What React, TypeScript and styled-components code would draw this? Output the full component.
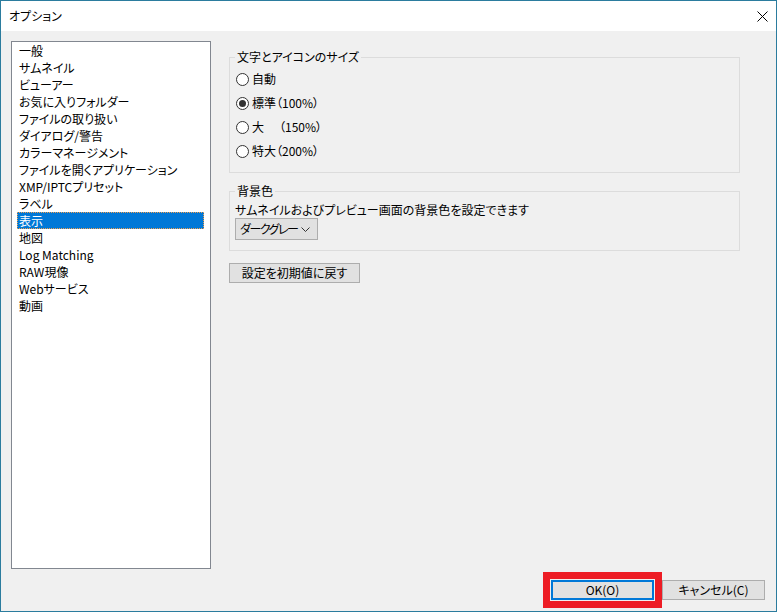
import React from "react";
import styled, { createGlobalStyle } from "styled-components";

const GlobalStyle = createGlobalStyle`
  html, body {
    margin: 0;
    padding: 0;
    background: #ffffff;
  }
  body {
    font-family: "Noto Sans CJK JP", "Noto Sans", sans-serif;
    font-size: 12px;
    font-feature-settings: "palt";
    color: #000000;
  }
  * {
    box-sizing: border-box;
  }
`;

const Window = styled.div`
  width: 777px;
  height: 612px;
  border: 1px solid #2b7c9e;
  display: flex;
  flex-direction: column;
  background: #f0f0f0;
`;

const TitleBar = styled.div`
  height: 30px;
  flex: none;
  background: #ffffff;
  display: flex;
  align-items: center;
  justify-content: space-between;
  padding-left: 8px;
`;

const Title = styled.span`
  line-height: 16px;
`;

const CloseButton = styled.div`
  width: 28px;
  height: 30px;
  display: flex;
  align-items: center;
  justify-content: center;
`;

const Body = styled.div`
  flex: 1;
  display: flex;
  flex-direction: column;
  padding: 10px 11px 3px 10px;
`;

const Main = styled.div`
  display: flex;
  gap: 18px;
  height: 528px;
`;

const CategoryList = styled.ul`
  width: 200px;
  height: 528px;
  margin: 0;
  padding: 0;
  list-style: none;
  background: #ffffff;
  border: 1px solid #828790;
`;

const CategoryItem = styled.li<{ $selected?: boolean }>`
  height: 17px;
  line-height: 18px;
  margin: 0 6px 0 5px;
  padding-left: 2px;
  white-space: nowrap;
  background: ${(p) => (p.$selected ? "#0078d7" : "transparent")};
  color: ${(p) => (p.$selected ? "#ffffff" : "#000000")};
  outline: ${(p) => (p.$selected ? "1px dotted #f0a050" : "none")};
  outline-offset: -1px;
`;

const Panel = styled.div`
  width: 511px;
  display: flex;
  flex-direction: column;
  align-items: flex-start;
  padding-top: 16px;
`;

const GroupBox = styled.div<{ $padLeft: number; $gap?: number }>`
  width: 511px;
  border: 1px solid #dcdcdc;
  display: flex;
  flex-direction: column;
  align-items: flex-start;
  padding: 0 6px 0 ${(p) => p.$padLeft}px;
  margin-top: ${(p) => p.$gap ?? 0}px;
`;

const GroupTitle = styled.div<{ $shift?: number }>`
  margin-top: -9px;
  margin-left: ${(p) => p.$shift ?? -1}px;
  padding: 0 2px;
  line-height: 16px;
  background: #f0f0f0;
  white-space: nowrap;
`;

const RadioList = styled.div`
  display: flex;
  flex-direction: column;
  margin-top: 2px;
  padding-bottom: 9px;
`;

const RadioRow = styled.label`
  height: 24px;
  display: flex;
  align-items: center;
  gap: 3px;
  line-height: 16px;
  white-space: pre;
`;

const RadioCircle = styled.span<{ $checked?: boolean }>`
  width: 13px;
  height: 13px;
  flex: none;
  border-radius: 50%;
  border: 1px solid #333333;
  background: #ffffff;
  display: flex;
  align-items: center;
  justify-content: center;
  &::after {
    content: "";
    width: 7px;
    height: 7px;
    border-radius: 50%;
    background: ${(p) => (p.$checked ? "#333333" : "transparent")};
  }
`;

const WideSpace = styled.span`
  display: inline-block;
  width: 15px;
`;

const Description = styled.div`
  margin-top: 3px;
  line-height: 16px;
  white-space: nowrap;
`;

const Select = styled.div`
  width: 83px;
  height: 22px;
  margin-bottom: 10px;
  border: 1px solid #adadad;
  background: #e1e1e1;
  display: flex;
  align-items: center;
  justify-content: space-between;
  padding: 0 7px 0 4px;
  line-height: 16px;
  white-space: nowrap;
`;

const SelectValue = styled.span`
  letter-spacing: -1.5px;
`;

const Chevron = styled.svg`
  flex: none;
`;

const Button = styled.div<{ $width: number; $focused?: boolean }>`
  width: ${(p) => p.$width}px;
  height: 20px;
  border: ${(p) => (p.$focused ? "2px solid #0078d7" : "1px solid #adadad")};
  background: #e1e1e1;
  display: flex;
  align-items: center;
  justify-content: center;
  line-height: 16px;
  white-space: nowrap;
`;

const ResetButton = styled(Button)`
  margin-top: 12px;
`;

const Footer = styled.div`
  margin-top: 3px;
  display: flex;
  align-items: center;
  justify-content: flex-end;
`;

const Highlight = styled.div`
  border: 7px solid #ed1c24;
  padding: 1px;
`;

const categories = [
  "一般",
  "サムネイル",
  "ビューアー",
  "お気に入りフォルダー",
  "ファイルの取り扱い",
  "ダイアログ/警告",
  "カラーマネージメント",
  "ファイルを開くアプリケーション",
  "XMP/IPTCプリセット",
  "ラベル",
  "表示",
  "地図",
  "Log Matching",
  "RAW現像",
  "Webサービス",
  "動画",
];

const sizes = [
  { name: "自動", rate: "", checked: false },
  { name: "標準", rate: "（100%）", checked: true },
  { name: "大", rate: "（150%）", checked: false, wide: true },
  { name: "特大", rate: "（200%）", checked: false },
];

export default function App() {
  return (
    <>
      <GlobalStyle />
      <Window>
        <TitleBar>
          <Title>オプション</Title>
          <CloseButton>
            <svg width="11" height="11" viewBox="0 0 11 11">
              <path d="M0.5 0.5 L10.5 10.5 M10.5 0.5 L0.5 10.5" stroke="#000" strokeWidth="1" />
            </svg>
          </CloseButton>
        </TitleBar>
        <Body>
          <Main>
            <CategoryList>
              {categories.map((c) => (
                <CategoryItem key={c} $selected={c === "表示"}>
                  {c}
                </CategoryItem>
              ))}
            </CategoryList>
            <Panel>
              <GroupBox $padLeft={6}>
                <GroupTitle>文字とアイコンのサイズ</GroupTitle>
                <RadioList>
                  {sizes.map((s) => (
                    <RadioRow key={s.name}>
                      <RadioCircle $checked={s.checked} />
                      <span>
                        {s.name}
                        {s.wide && <WideSpace>　</WideSpace>}
                        {s.rate}
                      </span>
                    </RadioRow>
                  ))}
                </RadioList>
              </GroupBox>
              <GroupBox $padLeft={5} $gap={18}>
                <GroupTitle $shift={0}>背景色</GroupTitle>
                <Description>サムネイルおよびプレビュー画面の背景色を設定できます</Description>
                <Select>
                  <SelectValue>ダークグレー</SelectValue>
                  <Chevron width="9" height="5" viewBox="0 0 9 5">
                    <path d="M0.5 0.5 L4.5 4.5 L8.5 0.5" stroke="#333" strokeWidth="1" fill="none" />
                  </Chevron>
                </Select>
              </GroupBox>
              <ResetButton $width={131}>設定を初期値に戻す</ResetButton>
            </Panel>
          </Main>
          <Footer>
            <Highlight>
              <Button $width={103} $focused>
                OK(O)
              </Button>
            </Highlight>
            <Button $width={103}>キャンセル(C)</Button>
          </Footer>
        </Body>
      </Window>
    </>
  );
}
